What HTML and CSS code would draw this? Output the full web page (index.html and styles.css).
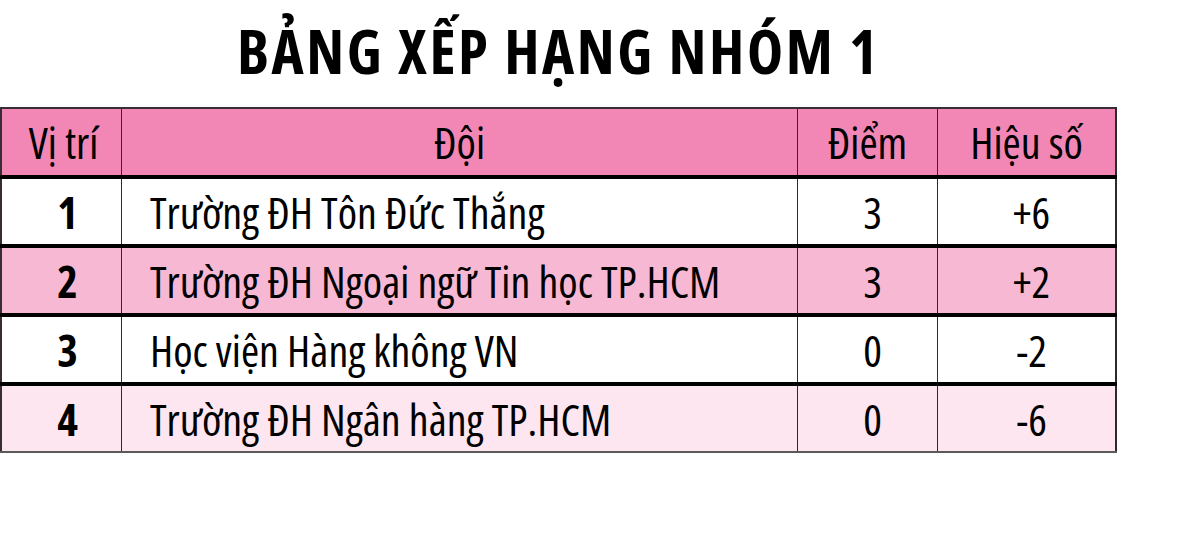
FILE: index.html
```html
<!DOCTYPE html>
<html lang="vi">
<head>
<meta charset="utf-8">
<title>Bảng xếp hạng nhóm 1</title>
<link rel="stylesheet" href="styles.css">
</head>
<body>
<div class="page">
  <h1 class="title">BẢNG XẾP HẠNG NHÓM 1</h1>
  <table class="standings">
    <thead>
      <tr class="head">
        <th class="c-pos">Vị trí</th>
        <th class="c-team">Đội</th>
        <th class="c-pts">Điểm</th>
        <th class="c-gd">Hiệu số</th>
      </tr>
    </thead>
    <tbody>
      <tr class="r-white">
        <td class="c-pos">1</td>
        <td class="c-team">Trường ĐH Tôn Đức Thắng</td>
        <td class="c-pts">3</td>
        <td class="c-gd">+6</td>
      </tr>
      <tr class="r-pink">
        <td class="c-pos">2</td>
        <td class="c-team">Trường ĐH Ngoại ngữ Tin học TP.HCM</td>
        <td class="c-pts">3</td>
        <td class="c-gd">+2</td>
      </tr>
      <tr class="r-white">
        <td class="c-pos">3</td>
        <td class="c-team">Học viện Hàng không VN</td>
        <td class="c-pts">0</td>
        <td class="c-gd">-2</td>
      </tr>
      <tr class="r-light last">
        <td class="c-pos">4</td>
        <td class="c-team">Trường ĐH Ngân hàng TP.HCM</td>
        <td class="c-pts">0</td>
        <td class="c-gd">-6</td>
      </tr>
    </tbody>
  </table>
</div>
</body>
</html>
```
FILE: styles.css
```css
html, body {
  margin: 0;
  padding: 0;
  background: #ffffff;
}

body {
  font-family: "Open Sans", "DejaVu Sans", sans-serif;
  font-stretch: 75%;
  color: #000000;
}

.page {
  width: 1117px;
}

.title {
  margin: 0;
  height: 107px;
  box-sizing: border-box;
  padding-top: 16px;
  font-size: 61px;
  line-height: 70px;
  font-weight: bold;
  text-align: center;
  letter-spacing: 2.6px;
}

.standings {
  width: 1117px;
  border-collapse: collapse;
  table-layout: fixed;
  border-top: 2px solid #3a2c33;
  border-left: 2px solid #3a2c33;
  border-right: 2px solid #2e2a2c;
  border-bottom: 2px solid #5a5a5a;
}

.standings th,
.standings td {
  padding: 0;
  font-size: 44px;
  font-weight: normal;
  text-align: center;
  vertical-align: middle;
  white-space: nowrap;
  border-left: 1px solid #2b2b2b;
  border-right: 1px solid #2b2b2b;
}

.head th {
  height: 66px;
  background: #f287b6;
  border-bottom: 4px solid #000000;
}

tbody td {
  height: 65px;
  border-bottom: 4px solid #000000;
}

tbody tr.last td {
  border-bottom: 2px solid #5a5a5a;
}

.r-white td { background: #ffffff; }
.r-pink td { background: #f7b8d3; }
.r-light td { background: #fde6f0; }

.head th.c-pos { width: 115px; padding-left: 4px; }
.head th.c-team { width: 675px; }
.head th.c-pts { width: 139px; }
.head th.c-gd { width: auto; }

tbody td.c-pos {
  font-weight: bold;
  padding-left: 12px;
}

tbody td.c-team {
  text-align: left;
  padding-left: 28px;
}

tbody td.c-pts { padding-left: 10px; }
tbody td.c-gd { padding-left: 10px; }
```
